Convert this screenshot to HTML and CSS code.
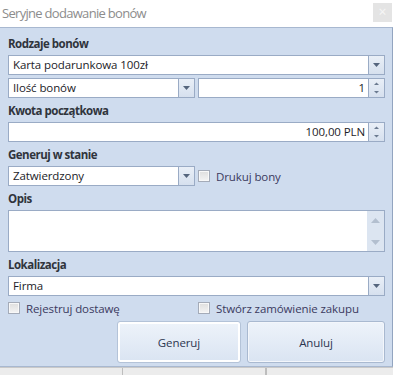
FILE: index.html
```html
<!DOCTYPE html>
<html lang="pl">
<head>
    <meta charset="UTF-8">
    <meta name="viewport" content="width=device-width, initial-scale=1.0">
    <title>Seryjne dodawanie bonów</title>
    <link rel="stylesheet" href="styles.css">
</head>
<body>
    <div class="window">
        <div class="titlebar">
            <span class="title">Seryjne dodawanie bonów</span>
            <span class="close">×</span>
        </div>

        <div class="panel">
            <div class="field-label">Rodzaje bonów</div>
            <div class="combo">
                <span class="value">Karta podarunkowa 100zł</span>
                <span class="side-btn">
                    <svg width="7" height="4" viewBox="0 0 7 4"><polygon points="0,0 7,0 3.5,4" fill="#55657d"/></svg>
                </span>
            </div>
            <div class="row">
                <div class="combo">
                    <span class="value">Ilość bonów</span>
                    <span class="side-btn">
                        <svg width="7" height="4" viewBox="0 0 7 4"><polygon points="0,0 7,0 3.5,4" fill="#55657d"/></svg>
                    </span>
                </div>
                <div class="combo">
                    <span class="value number">1</span>
                    <span class="side-btn spin">
                        <svg width="7" height="12" viewBox="0 0 7 12"><polygon points="1,3 6,3 3.5,0.5" fill="#6b7a90"/><polygon points="1,9 6,9 3.5,11.5" fill="#6b7a90"/></svg>
                    </span>
                </div>
            </div>

            <div class="field-label">Kwota początkowa</div>
            <div class="combo">
                <span class="value number">100,00 PLN</span>
                <span class="side-btn spin">
                    <svg width="7" height="12" viewBox="0 0 7 12"><polygon points="1,3 6,3 3.5,0.5" fill="#6b7a90"/><polygon points="1,9 6,9 3.5,11.5" fill="#6b7a90"/></svg>
                </span>
            </div>

            <div class="field-label">Generuj w stanie</div>
            <div class="row">
                <div class="combo">
                    <span class="value">Zatwierdzony</span>
                    <span class="side-btn">
                        <svg width="7" height="4" viewBox="0 0 7 4"><polygon points="0,0 7,0 3.5,4" fill="#55657d"/></svg>
                    </span>
                </div>
                <label class="check"><span class="box"></span>Drukuj bony</label>
            </div>

            <div class="field-label">Opis</div>
            <div class="memo">
                <span class="memo-text"></span>
                <span class="scrollbar">
                    <svg width="9" height="5" viewBox="0 0 9 5"><polygon points="0,5 9,5 4.5,0" fill="#b3bfcf"/></svg>
                    <svg width="9" height="5" viewBox="0 0 9 5"><polygon points="0,0 9,0 4.5,5" fill="#b3bfcf"/></svg>
                </span>
            </div>

            <div class="field-label">Lokalizacja</div>
            <div class="combo">
                <span class="value">Firma</span>
                <span class="side-btn">
                    <svg width="7" height="4" viewBox="0 0 7 4"><polygon points="0,0 7,0 3.5,4" fill="#55657d"/></svg>
                </span>
            </div>

            <div class="row checks">
                <label class="check"><span class="box"></span>Rejestruj dostawę</label>
                <label class="check"><span class="box"></span>Stwórz zamówienie zakupu</label>
            </div>

            <div class="actions">
                <button class="button default">Generuj</button>
                <button class="button cancel">Anuluj</button>
            </div>
        </div>

        <div class="statusbar">
            <span class="cell first"></span>
            <span class="cell second"></span>
            <span class="cell"></span>
        </div>
    </div>
</body>
</html>
```

FILE: styles.css
```css
* {
    box-sizing: border-box;
    margin: 0;
    padding: 0;
}

body {
    background-color: #ffffff;
    font-family: "Open Sans", "Noto Sans", "DejaVu Sans", sans-serif;
    font-size: 11.5px;
    letter-spacing: -0.1px;
    color: #1c1c28;
}

.window {
    width: 393px;
    height: 375px;
    display: flex;
    flex-direction: column;
    overflow: hidden;
}

/* title bar */
.titlebar {
    height: 27px;
    display: flex;
    justify-content: space-between;
    align-items: flex-start;
    padding: 3px 1px 0 2px;
    background-color: #ffffff;
}

.title {
    font-size: 13px;
    letter-spacing: -0.7px;
    line-height: 20px;
    color: #8c8c8c;
}

.close {
    width: 19px;
    height: 19px;
    background-color: #e4e4e4;
    color: #f6f6f6;
    font-size: 14px;
    line-height: 18px;
    text-align: center;
}

/* main panel */
.panel {
    height: 340px;
    background-color: #cfdcee;
    border-top: 1px solid #a8b8d0;
    border-right: 1px solid #93a5c0;
    border-bottom: 1px solid #a8b8d0;
    padding: 8px 7px 0 8px;
    display: flex;
    flex-direction: column;
}

.field-label {
    height: 16px;
    line-height: 16px;
    font-weight: 700;
    letter-spacing: -0.5px;
    color: #30343c;
    margin-top: 5px;
    margin-bottom: 3px;
}

.panel > .field-label:first-child {
    margin-top: 0;
}

.combo {
    height: 20px;
    display: flex;
    background-color: #ffffff;
    border: 1px solid #9aabc5;
}

.value {
    flex-grow: 1;
    padding: 0 4px;
    line-height: 18px;
    white-space: nowrap;
    overflow: hidden;
}

.value.number {
    text-align: right;
    padding-right: 3px;
}

.side-btn {
    width: 16px;
    flex-shrink: 0;
    display: flex;
    align-items: center;
    justify-content: center;
    border-left: 1px solid #9aabc5;
    background: linear-gradient(#e9eff7, #d6e0ee);
}

.row {
    display: flex;
    gap: 3px;
    margin-top: 3px;
}

.panel > .field-label + .row {
    margin-top: 0;
}

.row > .combo,
.row > .check {
    width: 187px;
    flex-shrink: 0;
}

.check {
    display: flex;
    align-items: center;
    gap: 6px;
    color: #3b3a5e;
    white-space: nowrap;
}

.check .box {
    width: 12px;
    height: 12px;
    border: 1px solid #a4abb8;
    background: linear-gradient(#dedede, #f4f4f4);
    box-shadow: inset 0 0 0 1px #f8f8f8;
}

.row.checks {
    height: 16px;
    margin-top: 4px;
}

/* description field */
.memo {
    height: 42px;
    display: flex;
    background-color: #ffffff;
    border: 1px solid #9aabc5;
}

.memo-text {
    flex-grow: 1;
}

.scrollbar {
    width: 17px;
    display: flex;
    flex-direction: column;
    justify-content: space-between;
    align-items: center;
    padding: 7px 0 6px;
    background-color: #dce5f1;
}

/* buttons */
.actions {
    display: flex;
    justify-content: flex-end;
    gap: 6px;
    margin-top: 5px;
}

.button {
    height: 42px;
    font-family: "Open Sans", "Noto Sans", sans-serif;
    font-size: 11.5px;
    letter-spacing: -0.1px;
    color: #2c3650;
    background: linear-gradient(#eef3fa, #dae4f2);
    border: 1px solid #a9b9d0;
    border-radius: 3px;
    box-shadow: inset 0 0 0 1px #f3f6fb;
}

.button.default {
    width: 124px;
    border-color: #b4c3d8;
    box-shadow: inset 0 0 0 2px #ffffff;
}

.button.cancel {
    width: 138px;
}

/* strip under the dialog */
.statusbar {
    flex-grow: 1;
    display: flex;
    background-color: #ececec;
    border-top: 1px solid #c9c9c9;
}

.cell {
    border-right: 1px solid #bdbdbd;
}

.cell.first {
    width: 123px;
}

.cell.second {
    width: 143px;
}
```
